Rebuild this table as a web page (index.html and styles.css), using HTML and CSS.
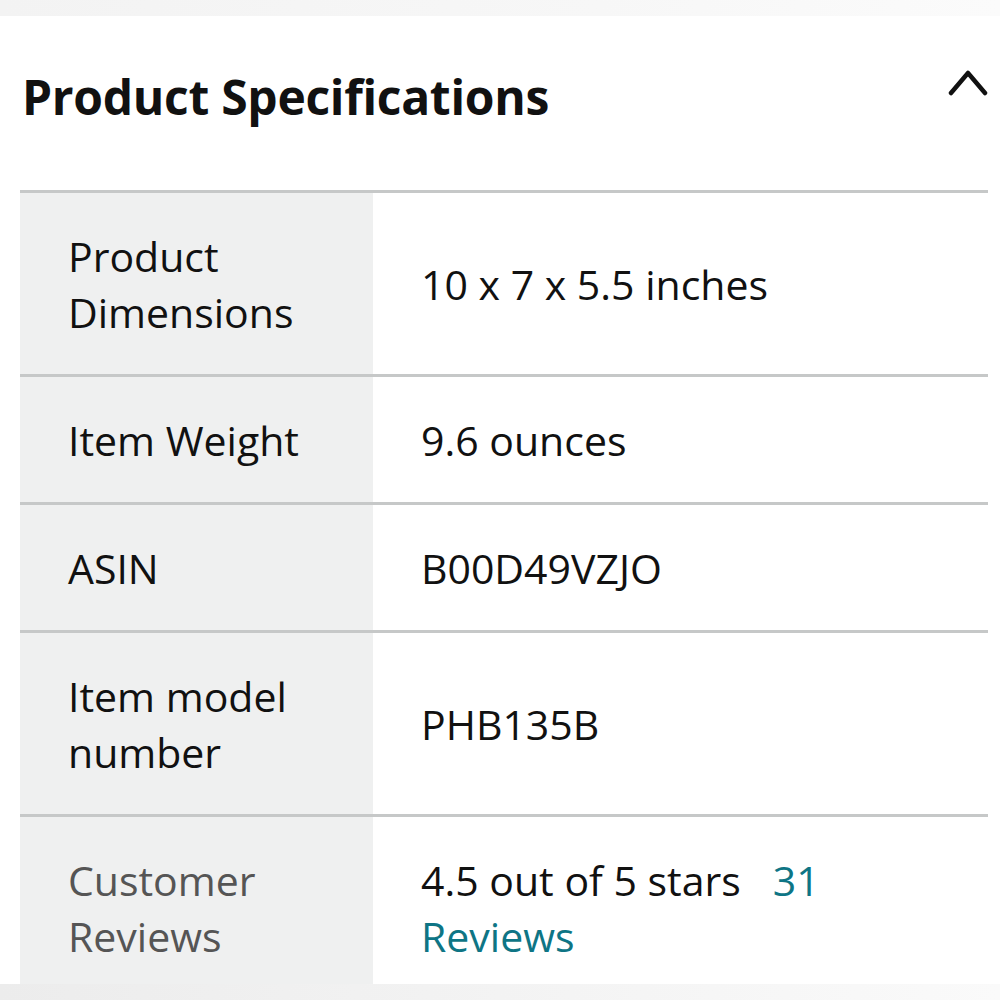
FILE: index.html
```html
<!DOCTYPE html>
<html>
<head>
  <meta charset="UTF-8">
  <title>Product Specifications</title>
  <link rel="stylesheet" href="styles.css">
</head>
<body>
  <div class="top-strip"></div>
  <div class="container">
    <div class="header">
      <h1>Product Specifications</h1>
      <svg class="chevron" width="42" height="28" viewBox="0 0 42 28">
        <polyline points="4,23 21,3 38,23" fill="none" stroke="#111" stroke-width="4.5" stroke-linecap="round" stroke-linejoin="round"/>
      </svg>
    </div>

    <table class="specs">
      <tr>
        <th>Product<br>Dimensions</th>
        <td>10 x 7 x 5.5 inches</td>
      </tr>
      <tr>
        <th>Item Weight</th>
        <td>9.6 ounces</td>
      </tr>
      <tr>
        <th>ASIN</th>
        <td>B00D49VZJO</td>
      </tr>
      <tr>
        <th>Item model<br>number</th>
        <td>PHB135B</td>
      </tr>
      <tr class="reviews">
        <th>Customer<br>Reviews</th>
        <td>4.5 out of 5 stars&nbsp;&nbsp; <a href="#">31<br>Reviews</a></td>
      </tr>
    </table>
  </div>
  <div class="bottom-strip"></div>
</body>
</html>
```

FILE: styles.css
```css
body {
  font-family: 'Open Sans', sans-serif;
  margin: 0;
  padding: 0;
  background: #fff;
  color: #111;
}
.top-strip {
  height: 16px;
  background: linear-gradient(to right, #f3f3f3, #f7f7f7 60%, #fbfbfb);
}
.container {
  padding: 0 12px 0 20px;
}
.header {
  display: flex;
  justify-content: space-between;
  align-items: center;
  height: 174px;
  padding-left: 2px;
}
h1 {
  margin: 0;
  font-size: 48px;
  font-weight: 700;
  letter-spacing: -0.3px;
  padding-bottom: 14px;
}
.chevron {
  margin-top: -38px;
  margin-right: -1px;
}
.specs {
  width: 100%;
  border-collapse: collapse;
  border-top: 3px solid #c6c8c8;
}
.specs tr {
  border-bottom: 3px solid #c6c8c8;
}
.specs tr:last-child {
  border-bottom: none;
}
.specs th,
.specs td {
  text-align: left;
  font-weight: 400;
  font-size: 41px;
  line-height: 56px;
  padding: 35px 20px 34px 48px;
  vertical-align: middle;
}
.specs th {
  width: 285px;
  background: #eff0f0;
}
.specs tr.reviews th,
.specs tr.reviews td {
  padding-bottom: 20px;
}
.specs tr.reviews th {
  color: #555;
}
.specs a {
  color: #0e7585;
  text-decoration: none;
}
.bottom-strip {
  height: 17px;
  background: linear-gradient(to right, #ececec, #f3f3f3 50%, #fafafa);
}
```
